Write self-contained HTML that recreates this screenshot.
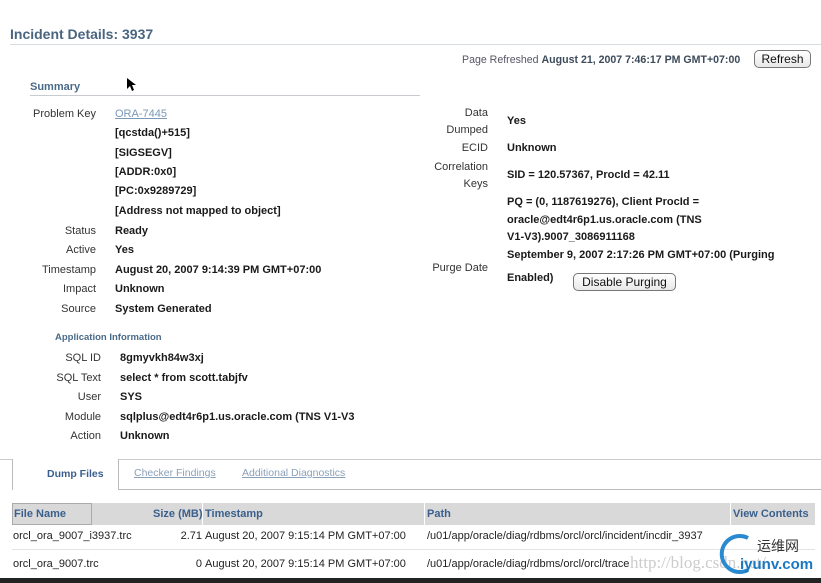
<!DOCTYPE html>
<html><head><style>
body{margin:0;width:821px;height:583px;background:#fff;font-family:"Liberation Sans",sans-serif;position:relative;overflow:hidden;color:#222}
.a{position:absolute;white-space:nowrap}
.t{font-size:11px}
.l{font-size:11px;color:#333;text-align:right}
.v{font-size:11px;font-weight:bold;color:#1a1a1a}
.btn{position:absolute;border:1px solid #777;border-radius:5px;background:linear-gradient(#fff,#e8e8e8);font-size:12px;text-align:center;color:#111}
.h{font-size:11px;font-weight:bold;color:#3a5f8c}
.c{font-size:11px;color:#222}
</style></head><body>
<div class="a" style="left:10px;top:26px;font-size:14px;font-weight:bold;color:#4a6580">Incident Details: 3937</div>
<div class="a" style="left:10px;top:44px;width:811px;height:1px;background:#d8dde2"></div>
<div class="a" style="left:462px;top:54px;font-size:10.6px;color:#556"><span>Page Refreshed</span> <b style="color:#3c4a5a">August 21, 2007 7:46:17 PM GMT+07:00</b></div>
<div class="btn" style="left:754px;top:50px;width:55px;height:16px;line-height:16px">Refresh</div>
<div class="a" style="left:30px;top:81px;font-size:11px;font-weight:bold;color:#4a6a8a">Summary</div>
<div class="a" style="left:30px;top:95px;width:390px;height:1px;background:#c8ccd0"></div>
<svg class="a" style="left:126px;top:77px" width="10" height="15"><path d="M1 1 L1 12 L4 9 L6 14 L8 13 L6 8 L10 8 Z" fill="#000"/></svg>

<div class="a l" style="left:0;width:96px;top:108px">Problem Key</div>
<div class="a t" style="left:115px;top:108px;color:#7a98b8;text-decoration:underline">ORA-7445</div>
<div class="a v" style="left:115px;top:127px">[qcstda()+515]</div>
<div class="a v" style="left:115px;top:147px">[SIGSEGV]</div>
<div class="a v" style="left:115px;top:166px">[ADDR:0x0]</div>
<div class="a v" style="left:115px;top:185px">[PC:0x9289729]</div>
<div class="a v" style="left:115px;top:205px">[Address not mapped to object]</div>
<div class="a l" style="left:0;width:96px;top:225px">Status</div><div class="a v" style="left:115px;top:225px">Ready</div>
<div class="a l" style="left:0;width:96px;top:244px">Active</div><div class="a v" style="left:115px;top:244px">Yes</div>
<div class="a l" style="left:0;width:96px;top:264px">Timestamp</div><div class="a v" style="left:115px;top:264px">August 20, 2007 9:14:39 PM GMT+07:00</div>
<div class="a l" style="left:0;width:96px;top:283px">Impact</div><div class="a v" style="left:115px;top:283px">Unknown</div>
<div class="a l" style="left:0;width:96px;top:303px">Source</div><div class="a v" style="left:115px;top:303px">System Generated</div>
<div class="a" style="left:55px;top:332px;font-size:9.5px;font-weight:bold;color:#4a6a8a">Application Information</div>
<div class="a l" style="left:0;width:101px;top:352px">SQL ID</div><div class="a v" style="left:120px;top:352px">8gmyvkh84w3xj</div>
<div class="a l" style="left:0;width:101px;top:372px">SQL Text</div><div class="a v" style="left:120px;top:372px">select * from scott.tabjfv</div>
<div class="a l" style="left:0;width:101px;top:391px">User</div><div class="a v" style="left:120px;top:391px">SYS</div>
<div class="a l" style="left:0;width:101px;top:411px">Module</div><div class="a v" style="left:120px;top:411px">sqlplus@edt4r6p1.us.oracle.com (TNS V1-V3</div>
<div class="a l" style="left:0;width:101px;top:430px">Action</div><div class="a v" style="left:120px;top:430px">Unknown</div>

<div class="a l" style="left:400px;width:88px;top:107px">Data</div>
<div class="a l" style="left:400px;width:88px;top:124px">Dumped</div>
<div class="a v" style="left:507px;top:115px">Yes</div>
<div class="a l" style="left:400px;width:88px;top:142px">ECID</div><div class="a v" style="left:507px;top:142px">Unknown</div>
<div class="a l" style="left:400px;width:88px;top:161px">Correlation</div>
<div class="a l" style="left:400px;width:88px;top:178px">Keys</div>
<div class="a v" style="left:507px;top:169px">SID = 120.57367, ProcId = 42.11</div>
<div class="a v" style="left:507px;top:196px">PQ = (0, 1187619276), Client ProcId =</div>
<div class="a v" style="left:507px;top:214px">oracle@edt4r6p1.us.oracle.com (TNS</div>
<div class="a v" style="left:507px;top:231px">V1-V3).9007_3086911168</div>
<div class="a v" style="left:507px;top:249px">September 9, 2007 2:17:26 PM GMT+07:00 (Purging</div>
<div class="a l" style="left:400px;width:88px;top:262px">Purge Date</div>
<div class="a v" style="left:507px;top:272px">Enabled)</div>
<div class="btn" style="left:573px;top:273px;width:101px;height:16px;line-height:16px">Disable Purging</div>

<div class="a" style="left:0;top:459px;width:821px;height:1px;background:#ccc"></div>
<div class="a" style="left:12px;top:459px;width:105px;height:31px;border-left:1px solid #bbb;border-right:1px solid #bbb;background:#fff"></div>
<div class="a" style="left:118px;top:489px;width:703px;height:1px;background:#bbb"></div>
<div class="a" style="left:47px;top:468px;font-size:10.5px;font-weight:bold;color:#3a5f8c">Dump Files</div>
<div class="a" style="left:134px;top:467px;font-size:10.5px;color:#8aa0b8;text-decoration:underline">Checker Findings</div>
<div class="a" style="left:242px;top:467px;font-size:10.5px;color:#8aa0b8;text-decoration:underline">Additional Diagnostics</div>

<div class="a" style="left:12px;top:503px;width:803px;height:22px;background:#d9d9d9"></div>
<div class="a" style="left:12px;top:503px;width:80px;height:22px;border:1px solid #aaa;box-sizing:border-box"></div>
<div class="a" style="left:202px;top:503px;width:1px;height:22px;background:#fff"></div>
<div class="a" style="left:424px;top:503px;width:1px;height:22px;background:#fff"></div>
<div class="a" style="left:730px;top:503px;width:1px;height:22px;background:#fff"></div>
<div class="a h" style="left:14px;top:508px">File Name</div>
<div class="a h" style="left:153px;top:508px">Size (MB)</div>
<div class="a h" style="left:205px;top:508px">Timestamp</div>
<div class="a h" style="left:427px;top:508px">Path</div>
<div class="a h" style="left:733px;top:508px">View Contents</div>
<div class="a c" style="left:13px;top:530px">orcl_ora_9007_i3937.trc</div>
<div class="a c" style="left:160px;top:530px;width:42px;text-align:right">2.71</div>
<div class="a c" style="left:205px;top:530px">August 20, 2007 9:15:14 PM GMT+07:00</div>
<div class="a c" style="left:427px;top:530px">/u01/app/oracle/diag/rdbms/orcl/orcl/incident/incdir_3937</div>
<div class="a" style="left:12px;top:549px;width:803px;height:1px;background:#e4e4e4"></div>
<div class="a c" style="left:13px;top:558px">orcl_ora_9007.trc</div>
<div class="a c" style="left:160px;top:558px;width:42px;text-align:right">0</div>
<div class="a c" style="left:205px;top:558px">August 20, 2007 9:15:14 PM GMT+07:00</div>
<div class="a c" style="left:427px;top:558px">/u01/app/oracle/diag/rdbms/orcl/orcl/trace</div>
<div class="a" style="left:630px;top:553px;font-size:17px;color:#ccc;font-family:'Liberation Serif',serif">http://blog.csdn.net/</div>
<svg class="a" style="left:718px;top:532px" width="40" height="42"><path d="M30 6 A18 18 0 1 0 30 38" fill="none" stroke="#2a8ad0" stroke-width="4"/></svg>
<div class="a" style="left:757px;top:536px;font-size:14px;color:#333;font-family:'Liberation Sans','Noto Sans CJK SC',sans-serif">运维网</div>
<div class="a" style="left:740px;top:556px;font-size:15px;font-weight:bold;color:#1a78c2">iyunv.com</div>
<div class="a" style="left:0;top:578px;width:821px;height:5px;background:#222"></div>
</body></html>
